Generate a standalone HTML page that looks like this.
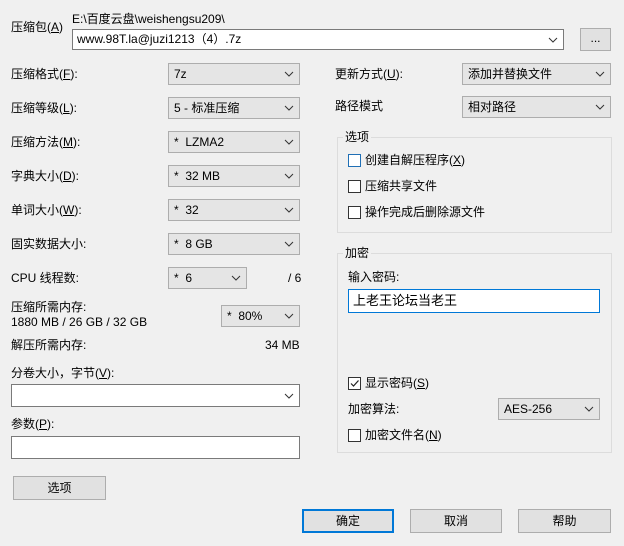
<!DOCTYPE html><html><head><meta charset="utf-8"><style>
*{box-sizing:border-box}
body{margin:0;width:624px;height:546px;background:#f0f0f0;position:relative;overflow:hidden;font-family:"Liberation Sans","Noto Sans CJK SC",sans-serif;font-size:12px;color:#000}
.a{position:absolute;white-space:nowrap;line-height:14px}
.c{position:absolute;height:22px;background:#e5e5e5;border:1px solid #adadad;padding:0 0 0 5px;line-height:20px}
.c svg,.e svg{position:absolute;right:5px;top:7px}
.e{position:absolute;background:#fff;border:1px solid #7a7a7a;line-height:18px;padding-left:4px}
.b{position:absolute;height:24px;background:#e1e1e1;border:1px solid #adadad;text-align:center;line-height:22px}
.g{position:absolute;border:1px solid #dcdcdc}
.k{position:absolute;width:13px;height:13px;border:1px solid #333;background:#fff}
</style></head><body>
<div class="a" style="left:11px;top:20px">压缩包(<u>A</u>)</div>
<div class="a" style="left:72px;top:12px">E:\百度云盘\weishengsu209\</div>
<div class="e" style="left:72px;top:29px;width:492px;height:21px">www.98T.la@juzi1213（4）.7z<svg width="10" height="6"><path d="M1 1L5 5L9 1" stroke="#333" fill="none"/></svg></div>
<div class="b" style="left:580px;top:28px;width:31px;height:23px;line-height:18px">...</div>

<div class="a" style="left:11px;top:67px">压缩格式(<u>F</u>):</div>
<div class="a" style="left:11px;top:101px">压缩等级(<u>L</u>):</div>
<div class="a" style="left:11px;top:135px">压缩方法(<u>M</u>):</div>
<div class="a" style="left:11px;top:169px">字典大小(<u>D</u>):</div>
<div class="a" style="left:11px;top:203px">单词大小(<u>W</u>):</div>
<div class="a" style="left:11px;top:237px">固实数据大小:</div>
<div class="a" style="left:11px;top:271px">CPU 线程数:</div>
<div class="a" style="left:11px;top:300px">压缩所需内存:</div>
<div class="a" style="left:11px;top:315px">1880 MB / 26 GB / 32 GB</div>
<div class="a" style="left:11px;top:338px">解压所需内存:</div>
<div class="a" style="left:265px;top:338px">34 MB</div>
<div class="a" style="left:288px;top:271px">/ 6</div>

<div class="c" style="left:168px;top:63px;width:132px">7z<svg width="10" height="6"><path d="M1 1L5 5L9 1" stroke="#333" fill="none"/></svg></div>
<div class="c" style="left:168px;top:97px;width:132px">5 - 标准压缩<svg width="10" height="6"><path d="M1 1L5 5L9 1" stroke="#333" fill="none"/></svg></div>
<div class="c" style="left:168px;top:131px;width:132px">*&nbsp; LZMA2<svg width="10" height="6"><path d="M1 1L5 5L9 1" stroke="#333" fill="none"/></svg></div>
<div class="c" style="left:168px;top:165px;width:132px">*&nbsp; 32 MB<svg width="10" height="6"><path d="M1 1L5 5L9 1" stroke="#333" fill="none"/></svg></div>
<div class="c" style="left:168px;top:199px;width:132px">*&nbsp; 32<svg width="10" height="6"><path d="M1 1L5 5L9 1" stroke="#333" fill="none"/></svg></div>
<div class="c" style="left:168px;top:233px;width:132px">*&nbsp; 8 GB<svg width="10" height="6"><path d="M1 1L5 5L9 1" stroke="#333" fill="none"/></svg></div>
<div class="c" style="left:168px;top:267px;width:79px">*&nbsp; 6<svg width="10" height="6"><path d="M1 1L5 5L9 1" stroke="#333" fill="none"/></svg></div>
<div class="c" style="left:221px;top:305px;width:79px">*&nbsp; 80%<svg width="10" height="6"><path d="M1 1L5 5L9 1" stroke="#333" fill="none"/></svg></div>

<div class="a" style="left:11px;top:366px">分卷大小，字节(<u>V</u>):</div>
<div class="e" style="left:11px;top:384px;width:289px;height:23px"><svg width="10" height="6" style="top:8px"><path d="M1 1L5 5L9 1" stroke="#333" fill="none"/></svg></div>
<div class="a" style="left:11px;top:417px">参数(<u>P</u>):</div>
<div class="e" style="left:11px;top:436px;width:289px;height:23px"></div>
<div class="b" style="left:13px;top:476px;width:93px">选项</div>

<div class="a" style="left:335px;top:67px">更新方式(<u>U</u>):</div>
<div class="c" style="left:462px;top:63px;width:149px">添加并替换文件<svg width="10" height="6"><path d="M1 1L5 5L9 1" stroke="#333" fill="none"/></svg></div>
<div class="a" style="left:335px;top:99px">路径模式</div>
<div class="c" style="left:462px;top:96px;width:149px">相对路径<svg width="10" height="6"><path d="M1 1L5 5L9 1" stroke="#333" fill="none"/></svg></div>

<div class="g" style="left:337px;top:137px;width:275px;height:96px"></div>
<div class="a" style="left:343px;top:130px;background:#f0f0f0;padding:0 2px">选项</div>
<div class="k" style="left:348px;top:154px;border-color:#1f6fb5"></div><div class="a" style="left:365px;top:153px">创建自解压程序(<u>X</u>)</div>
<div class="k" style="left:348px;top:180px"></div><div class="a" style="left:365px;top:179px">压缩共享文件</div>
<div class="k" style="left:348px;top:206px"></div><div class="a" style="left:365px;top:205px">操作完成后删除源文件</div>

<div class="g" style="left:337px;top:253px;width:275px;height:200px"></div>
<div class="a" style="left:343px;top:246px;background:#f0f0f0;padding:0 2px">加密</div>
<div class="a" style="left:348px;top:270px">输入密码:</div>
<div class="e" style="left:348px;top:289px;width:252px;height:24px;border-color:#0078d7;line-height:21px;font-size:13px">上老王论坛当老王</div>
<div class="k" style="left:348px;top:377px"><svg width="11" height="11" style="position:absolute;left:0;top:0"><path d="M2 5.5L4.5 8L9.5 2.5" stroke="#222" stroke-width="1.2" fill="none"/></svg></div><div class="a" style="left:365px;top:376px">显示密码(<u>S</u>)</div>
<div class="a" style="left:348px;top:402px">加密算法:</div>
<div class="c" style="left:498px;top:398px;width:102px">AES-256<svg width="10" height="6"><path d="M1 1L5 5L9 1" stroke="#333" fill="none"/></svg></div>
<div class="k" style="left:348px;top:429px"></div><div class="a" style="left:365px;top:428px">加密文件名(<u>N</u>)</div>

<div class="b" style="left:302px;top:509px;width:92px;border:2px solid #0078d7;line-height:20px">确定</div>
<div class="b" style="left:410px;top:509px;width:92px">取消</div>
<div class="b" style="left:518px;top:509px;width:93px">帮助</div>
</body></html>
